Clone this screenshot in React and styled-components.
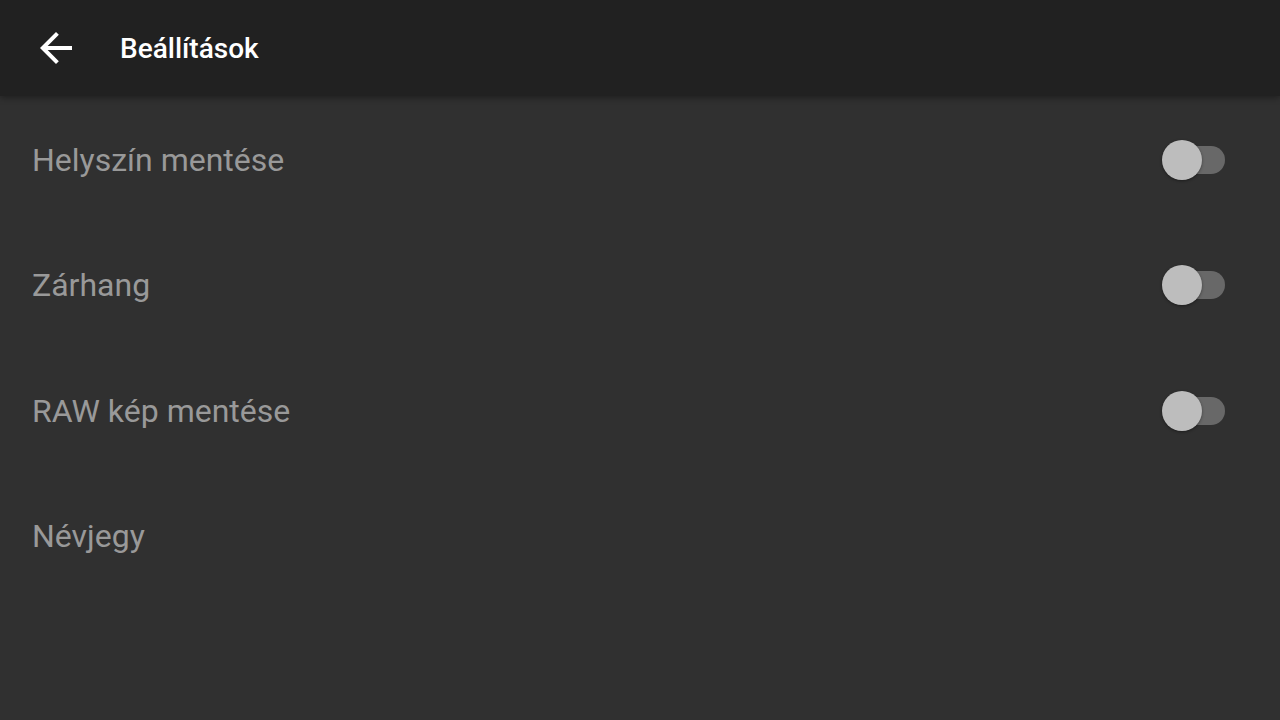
import React from "react"
import styled, { createGlobalStyle } from "styled-components"

const GlobalStyle = createGlobalStyle`
  html, body { margin: 0; padding: 0; background: #303030; }
  body { font-family: Roboto, "Noto Sans", sans-serif; }
`

const Page = styled.div`
  width: 1280px;
  height: 720px;
  background: #303030;
  overflow: hidden;
`

const TopBar = styled.header`
  height: 96px;
  background: #212121;
  display: flex;
  align-items: center;
  box-shadow: 0 2px 6px rgba(0, 0, 0, 0.35);
  position: relative;
`

const BackButton = styled.div`
  width: 120px;
  padding-left: 32px;
  box-sizing: border-box;
  display: flex;
  align-items: center;
`

const Title = styled.h1`
  margin: 0;
  font-size: 28px;
  font-weight: 500;
  color: #ffffff;
  padding-left: 0;
`

const List = styled.div`
  display: flex;
  flex-direction: column;
  padding-top: 1px;
`

const Row = styled.div`
  height: 125.5px;
  display: flex;
  align-items: center;
  justify-content: space-between;
  padding: 0 55px 0 32px;
`

const Label = styled.span`
  font-size: 32px;
  color: #999999;
`

const Switch = styled.div`
  position: relative;
  width: 64px;
  height: 40px;
`

const Track = styled.div`
  position: absolute;
  left: 20px;
  top: 6px;
  width: 44px;
  height: 28px;
  border-radius: 14px;
  background: #686868;
`

const Thumb = styled.div`
  position: absolute;
  left: 1px;
  top: 0;
  width: 40px;
  height: 40px;
  border-radius: 50%;
  background: #bdbdbd;
  box-shadow: 0 1px 3px rgba(0, 0, 0, 0.4);
`

function Toggle() {
  return (
    <Switch>
      <Track />
      <Thumb />
    </Switch>
  )
}

const settings = [
  { label: "Helyszín mentése", toggle: true },
  { label: "Zárhang", toggle: true },
  { label: "RAW kép mentése", toggle: true },
  { label: "Névjegy", toggle: false },
]

export default function App() {
  return (
    <Page>
      <GlobalStyle />
      <TopBar>
        <BackButton>
          <svg width="48" height="48" viewBox="0 0 24 24">
            <path d="M20 11H7.83l5.59-5.59L12 4l-8 8 8 8 1.41-1.41L7.83 13H20v-2z" fill="#ffffff" />
          </svg>
        </BackButton>
        <Title>Beállítások</Title>
      </TopBar>
      <List>
        {settings.map((s) => (
          <Row key={s.label}>
            <Label>{s.label}</Label>
            {s.toggle && <Toggle />}
          </Row>
        ))}
      </List>
    </Page>
  )
}
